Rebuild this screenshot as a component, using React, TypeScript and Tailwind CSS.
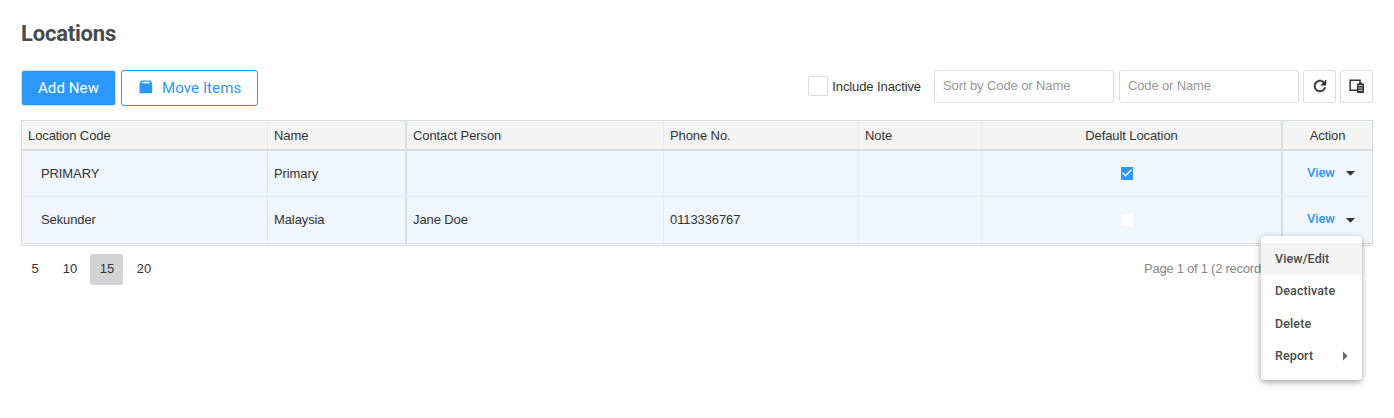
import { useState } from "react";

type Location = {
  code: string;
  name: string;
  contact: string;
  phone: string;
  note: string;
  isDefault: boolean;
};

const locations: Location[] = [
  { code: "PRIMARY", name: "Primary", contact: "", phone: "", note: "", isDefault: true },
  { code: "Sekunder", name: "Malaysia", contact: "Jane Doe", phone: "0113336767", note: "", isDefault: false },
];

const columns = "grid grid-cols-[246px_139px_257px_195px_123px_301px_89px]";
const thin = "border-r border-[#ebebeb] pl-1.5 flex items-center";
const thick = "border-r-2 border-[#dadddd] flex items-center";

const PackageIcon = () => (
  <svg width="14" height="14" viewBox="0 0 14 14" className="mt-[-3px]">
    <path
      fill="#2b98ff"
      fillRule="evenodd"
      d="M3 .4h8c.5 0 .9.2 1.1.6l1.1 2.8V12.4c0 .5-.2.9-.7.9H1.2c-.5 0-.7-.4-.7-.9V3.8L1.9 1C2.1.6 2.5.4 3 .4zM3.5 1.8 3 3.2h8L10.5 1.8z"
    />
  </svg>
);

const RefreshIcon = () => (
  <svg width="18" height="18" viewBox="0 0 24 24" fill="#333333" className="mt-[-2px]">
    <path
      stroke="#333333"
      strokeWidth=".7"
      d="M17.65 6.35A7.96 7.96 0 0 0 12 4a8 8 0 1 0 7.73 10h-2.08A6 6 0 1 1 12 6c1.66 0 3.14.69 4.22 1.78L13 11h7V4z"
    />
  </svg>
);

const ColumnsIcon = () => (
  <svg width="16" height="16" viewBox="0 0 16 16">
    <path fill="none" stroke="#333333" strokeWidth="1.5" d="M8 11.2H1.2V1.2h9.8V4" />
    <path fill="#333333" d="M8 4.5h2V3.6h3v.9h2V14H8z" />
    <path stroke="#ffffff" strokeWidth=".8" d="M9.3 6.6h4.4M9.3 9h4.4M9.3 11.4h4.4" />
  </svg>
);

const DefaultCheckbox = ({ checked }: { checked: boolean }) =>
  checked ? (
    <div className="w-3 h-[13px] bg-[#2b98ff]">
      <svg width="12" height="13" viewBox="0 0 12 13" fill="none">
        <path stroke="#ffffff" strokeWidth="1.4" d="M1.5 5.8l3 3 6-6" />
      </svg>
    </div>
  ) : (
    <div className="w-[13px] h-3.5 bg-white border border-[#f1f3f6]"></div>
  );

const ActionMenu = () => (
  <div className="absolute left-[1261px] top-[236px] w-[101px] h-36 pt-[7px] bg-white rounded-[4px] shadow-[0_2px_6px_rgba(0,0,0,0.38)] font-[Roboto,sans-serif] font-medium text-[12.5px] tracking-[0.1px] text-[#4a4a4a]">
    <div className="h-8 px-3.5 flex items-center bg-[#f4f4f4]">View/Edit</div>
    <div className="h-8 px-3.5 flex items-center">Deactivate</div>
    <div className="h-[33px] px-3.5 pt-px flex items-center">Delete</div>
    <div className="h-8 px-3.5 flex items-center justify-between">
      Report
      <svg width="5" height="10" viewBox="0 0 5 10" fill="#666666">
        <path d="M0 .5 4.5 5 0 9.5z" />
      </svg>
    </div>
  </div>
);

const App = () => {
  const [pageSize, setPageSize] = useState(15);
  const [inactive, setInactive] = useState(false);

  return (
    <div className="relative w-[1394px] h-[418px] overflow-hidden bg-white px-[21px] font-['Liberation_Sans',Arial,sans-serif] text-[13px] tracking-[-0.1px] text-[#333333]">
      <h1 className="h-[70px] pt-5 font-[Roboto,sans-serif] font-bold text-[22px] leading-7 tracking-[-0.2px] text-[#4a4a4a]">
        Locations
      </h1>

      <div className="h-[50px] flex items-start justify-between">
        <div className="flex gap-[5px] font-[Roboto,sans-serif] text-[15px] tracking-[0.1px]">
          <button className="w-[95px] h-9 pt-px rounded-[3px] border border-[#d4dde6] bg-[#2b98ff] text-white">
            Add New
          </button>
          <button className="w-[137px] h-9 rounded-[3px] border border-[#2b98ff] text-[#2b98ff] flex items-center pl-[17px] gap-[9px]">
            <PackageIcon />
            <span className="tracking-[0.1px]">Move Items</span>
          </button>
        </div>
        <div className="flex items-start">
          <label className="flex items-center mt-1.5 mr-[13px]">
            <input
              type="checkbox"
              checked={inactive}
              onChange={() => setInactive(!inactive)}
              className="appearance-none w-5 h-5 mr-1 border border-[#dcdcdc] rounded-[2px]"
            />
            <span className="pt-px">Include Inactive</span>
          </label>
          <input
            placeholder="Sort by Code or Name"
            className="w-[180px] h-[33px] mr-[5px] px-2 pb-0.5 border border-[#dcdcdc] rounded-[3px] placeholder:text-[#999999]"
          />
          <input
            placeholder="Code or Name"
            className="w-[180px] h-[33px] mr-1 px-2 pb-0.5 border border-[#dcdcdc] rounded-[3px] tracking-[-0.15px] placeholder:text-[#999999]"
          />
          <button className="w-[33px] h-[33px] mr-1 border border-[#dcdcdc] rounded-[3px] flex items-center justify-center">
            <RefreshIcon />
          </button>
          <button className="w-[33px] h-[33px] border border-[#dcdcdc] rounded-[3px] flex items-center justify-center">
            <ColumnsIcon />
          </button>
        </div>
      </div>

      <div className="border border-[#dadddd]">
        <div className={`${columns} h-[30px] bg-[#f4f4f4] border-b-2 border-[#dadddd] [&>div]:pt-0.5`}>
          <div className={thin}>Location Code</div>
          <div className={`${thick} pl-1.5`}>Name</div>
          <div className={thin}>Contact Person</div>
          <div className={thin}>Phone No.</div>
          <div className={thin}>Note</div>
          <div className={`${thick} justify-center`}>Default Location</div>
          <div className="flex items-center justify-center">Action</div>
        </div>
        {locations.map((loc, i) => (
          <div
            key={loc.code}
            className={`${columns} h-[46px] bg-[#f1f6fe] ${i === 0 ? "border-b border-[#ebebeb]" : "shadow-[inset_0_-1px_0_#ffffff]"}`}
          >
            <div className="border-r border-[#ebebeb] pl-[19px] flex items-center">{loc.code}</div>
            <div className={`${thick} pl-1.5`}>{loc.name}</div>
            <div className={thin}>{loc.contact}</div>
            <div className={thin}>{loc.phone}</div>
            <div className={thin}>{loc.note}</div>
            <div className={`${thick} pl-[139px]`}>
              <DefaultCheckbox checked={loc.isDefault} />
            </div>
            <div className="pl-6 flex items-center">
              <button className="pb-0.5 font-[Roboto,sans-serif] font-medium text-[#2b98ff] mr-[11px]">View</button>
              <svg width="9" height="5" viewBox="0 0 9 5" fill="#333333">
                <path d="M0 0h9L4.5 4.8z" />
              </svg>
            </div>
          </div>
        ))}
      </div>
      <div className="mt-px h-px bg-[#dadddd]"></div>

      <div className="flex justify-between pt-2">
        <div className="flex">
          {[5, 10, 15, 20].map((size) => (
            <button
              key={size}
              onClick={() => setPageSize(size)}
              className={`h-[31px] pb-0.5 mr-1 rounded-[3px] ${size === 5 ? "w-7" : "w-[33px] pl-px"} ${size === pageSize ? "bg-[#d3d3d3]" : ""}`}
            >
              {size}
            </button>
          ))}
        </div>
        <div className="w-[229px] h-[31px] pb-0.5 flex items-center tracking-[-0.25px] text-[#888888]">
          Page 1 of 1 (2 records)
        </div>
      </div>

      <ActionMenu />
    </div>
  );
};

export default App;
